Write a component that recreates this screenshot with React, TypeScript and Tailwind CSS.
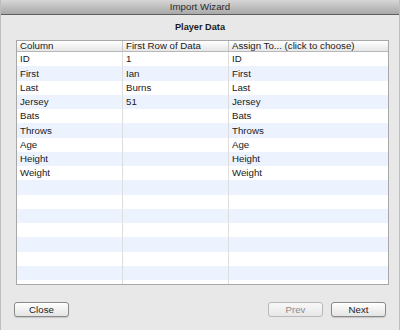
import React from "react";

const rows: [string, string, string][] = [
  ["ID", "1", "ID"],
  ["First", "Ian", "First"],
  ["Last", "Burns", "Last"],
  ["Jersey", "51", "Jersey"],
  ["Bats", "", "Bats"],
  ["Throws", "", "Throws"],
  ["Age", "", "Age"],
  ["Height", "", "Height"],
  ["Weight", "", "Weight"],
];

const allRows: [string, string, string][] = [
  ...rows,
  ...Array.from({ length: 8 }, () => ["", "", ""] as [string, string, string]),
];

export default function App() {
  return (
    <div
      className="w-[400px] h-[330px] bg-[#e8e8e8] flex flex-col overflow-hidden border-x border-[#bdbdbd] text-[#1a1a1a]"
      style={{ fontFamily: '"Liberation Sans", Arial, sans-serif' }}
    >
      <div className="h-[15px] shrink-0 bg-gradient-to-b from-[#d6d6d6] to-[#a9a9a9] border-b border-[#5e5e5e] flex items-center justify-center text-[9.7px] text-[#2a2a2a] leading-none">
        Import Wizard
      </div>
      <div className="h-[25px] shrink-0 flex items-center justify-center text-[9.2px] font-bold pt-[1px]">
        Player Data
      </div>
      <div className="mx-[15px] w-[373px] h-[245px] shrink-0 border border-[#a8a8a8] bg-white flex flex-col overflow-hidden text-[9.7px] leading-none">
        <div className="h-[11px] shrink-0 flex bg-gradient-to-b from-[#ffffff] to-[#e6e6e6] border-b border-[#b8b8b8]">
          <div className="w-[106px] px-[3px] flex items-center border-r border-[#c8c8c8]">Column</div>
          <div className="w-[106px] px-[3px] flex items-center border-r border-[#c8c8c8]">First Row of Data</div>
          <div className="flex-1 px-[3px] flex items-center">Assign To... (click to choose)</div>
        </div>
        {allRows.map((r, i) => (
          <div
            key={i}
            className={`h-[14.25px] shrink-0 flex ${i % 2 === 0 ? "bg-white" : "bg-[#edf3fe]"}`}
          >
            <div className="w-[106px] px-[3px] flex items-center border-r border-[#dedede]">{r[0]}</div>
            <div className="w-[106px] px-[3px] flex items-center border-r border-[#dedede]">{r[1]}</div>
            <div className="flex-1 px-[3px] flex items-center">{r[2]}</div>
          </div>
        ))}
      </div>
      <div className="flex items-start justify-between px-[13px] mt-[17px] text-[9.7px]">
        <button className="w-[55px] h-[15px] rounded-[3px] border border-[#8a8a8a] bg-gradient-to-b from-[#ffffff] to-[#e4e4e4] flex items-center justify-center leading-none shadow-[0_1px_1px_rgba(0,0,0,0.15)]">
          Close
        </button>
        <div className="flex gap-[8px]">
          <button className="w-[55px] h-[15px] rounded-[3px] border border-[#b8b8b8] bg-gradient-to-b from-[#f8f8f8] to-[#e8e8e8] flex items-center justify-center leading-none text-[#8a8a8a]">
            Prev
          </button>
          <button className="w-[55px] h-[15px] rounded-[3px] border border-[#8a8a8a] bg-gradient-to-b from-[#ffffff] to-[#e4e4e4] flex items-center justify-center leading-none shadow-[0_1px_1px_rgba(0,0,0,0.15)]">
            Next
          </button>
        </div>
      </div>
    </div>
  );
}
